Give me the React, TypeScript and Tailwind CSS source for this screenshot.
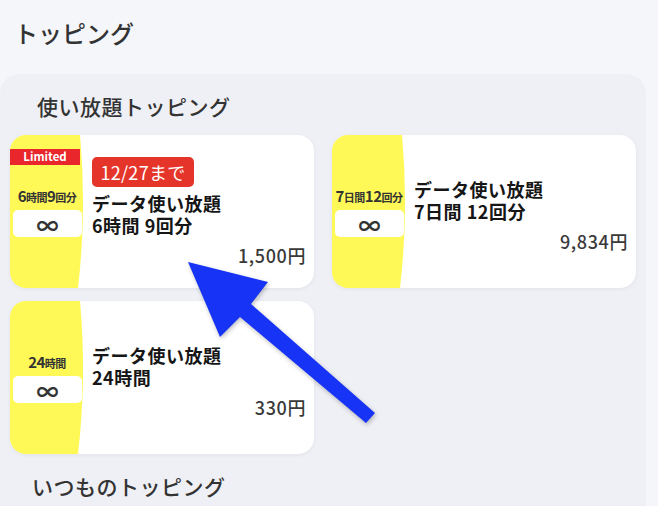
import React from 'react';

type Topping = {
  id: string;
  label: React.ReactNode;
  title: string;
  sub: string;
  price: string;
  deadline?: string;
  limited?: boolean;
};

const toppings: Topping[] = [
  {
    id: '6h9',
    label: (
      <>
        <span className="text-[15px]">6</span>時間<span className="text-[15px]">9</span>回分
      </>
    ),
    title: 'データ使い放題',
    sub: '6時間 9回分',
    price: '1,500円',
    deadline: '12/27まで',
    limited: true,
  },
  {
    id: '7d12',
    label: (
      <>
        <span className="text-[15px]">7</span>日間<span className="text-[15px]">12</span>回分
      </>
    ),
    title: 'データ使い放題',
    sub: '7日間 12回分',
    price: '9,834円',
  },
  {
    id: '24h',
    label: (
      <>
        <span className="text-[15px]">24</span>時間
      </>
    ),
    title: 'データ使い放題',
    sub: '24時間',
    price: '330円',
  },
];

const YellowTab = ({ label, limited }: { label: React.ReactNode; limited?: boolean }) => (
  <div className="relative flex w-[74px] shrink-0 flex-col items-center justify-center">
    <svg className="absolute inset-y-0 left-0 h-full w-[80px]" viewBox="0 0 80 153" preserveAspectRatio="none">
      <path d="M0 0 L70 0 Q77 76 68 153 L0 153 Z" fill="#fff957" />
    </svg>
    {limited ? (
      <div className="absolute left-0 top-[14px] flex h-[16px] w-[70px] items-center justify-center bg-[#e8262b] text-[11.5px] font-bold leading-none text-white">
        Limited
      </div>
    ) : null}
    <div className="relative mt-[2px] text-[11px] font-bold leading-[16px] tracking-[-0.5px] text-[#333]">{label}</div>
    <div className="relative ml-[3px] mt-[5px] flex h-[27px] w-[69px] self-start items-center justify-center rounded-[5px] bg-white text-[22px] font-bold leading-none text-[#333]">
      ∞
    </div>
  </div>
);

const ToppingCard = ({ item }: { item: Topping }) => (
  <div className="flex h-[153px] overflow-hidden rounded-[16px] bg-white shadow-[0_1px_4px_rgba(0,0,0,0.06)]">
    <YellowTab label={item.label} limited={item.limited} />
    <div className={`flex flex-1 flex-col justify-center pl-[8px] pr-[8px] ${item.deadline ? 'pt-0' : 'pt-[6px]'}`}>
      {item.deadline ? (
        <div className="mb-[5px] flex h-[30px] w-[102px] items-center justify-center rounded-[5px] bg-[#e5352a] text-[18px] leading-none tracking-[0.3px] text-white">
          {item.deadline}
        </div>
      ) : null}
      <div className="text-[18px] font-semibold leading-[22px] tracking-[0.5px] text-[#161616]">{item.title}</div>
      <div className="text-[18px] font-semibold leading-[22px] tracking-[0.5px] text-[#161616]">{item.sub}</div>
      <div className="mt-[8px] text-right text-[18px] font-medium leading-[22px] tracking-[0.6px] text-[#3a3a3a]">{item.price}</div>
    </div>
  </div>
);

export default function App() {
  return (
    <div
      className="relative h-[506px] w-[658px] overflow-hidden bg-[#f5f6fa]"
      style={{ fontFamily: '"Noto Sans CJK JP", "Noto Sans", sans-serif' }}
    >
      <h1 className="pl-[14px] pt-[17px] text-[24px] font-medium leading-[32px] text-[#333]">トッピング</h1>

      <div className="relative mt-[25px] w-[646px] rounded-[20px] bg-[#eff0f5] px-[10px] pb-[40px] pt-[18px]">
        <h2 className="mb-[15px] pl-[27px] text-[21px] font-medium leading-[28px] tracking-[0.5px] text-[#333]">使い放題トッピング</h2>
        <div className="grid grid-cols-2 gap-x-[18px] gap-y-[13px]">
          {toppings.map((t) => (
            <ToppingCard key={t.id} item={t} />
          ))}
        </div>
        <h2 className="mt-[18px] pl-[22px] text-[21px] font-medium leading-[28px] tracking-[0.5px] text-[#333]">いつものトッピング</h2>
      </div>

      <svg className="pointer-events-none absolute left-0 top-0" width="658" height="506" viewBox="0 0 658 506">
        <polygon
          points="188,262 268,282 251,304 375,413 366,423 240,317 220,337"
          fill="#1733f5"
          style={{ filter: 'drop-shadow(1px 2px 2px rgba(0,0,0,0.25))' }}
        />
      </svg>
    </div>
  );
}
